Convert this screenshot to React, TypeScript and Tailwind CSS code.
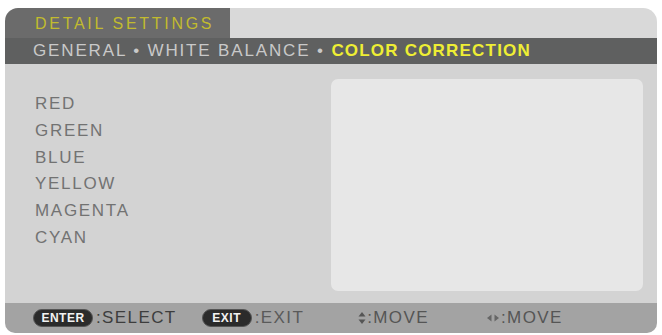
const font = { fontFamily: '"Liberation Sans", Arial, sans-serif' };

function KeyBadge({ label, width }: { label: string; width: string }) {
  return (
    <span
      className={`inline-flex h-[18px] ${width} items-center justify-center rounded-full border border-[#555] bg-[#2b2b2b] text-[12px] font-bold tracking-[0.5px] text-[#f2f2f2]`}
    >
      {label}
    </span>
  );
}

function UpDown() {
  return (
    <svg width="8" height="14" viewBox="0 0 8 14" className="mr-[1px]">
      <path d="M4 1 L7.5 5.5 L0.5 5.5 Z" fill="#555" />
      <path d="M4 13 L7.5 8.5 L0.5 8.5 Z" fill="#555" />
    </svg>
  );
}

function LeftRight() {
  return (
    <svg width="14" height="10" viewBox="0 0 14 10" className="mr-[1px]">
      <path d="M1 5 L5.5 1.5 L5.5 8.5 Z" fill="#666" />
      <path d="M13 5 L8.5 1.5 L8.5 8.5 Z" fill="#666" />
    </svg>
  );
}

const items = ["RED", "GREEN", "BLUE", "YELLOW", "MAGENTA", "CYAN"];

export default function App() {
  return (
    <div className="h-[335px] w-[662px] bg-white pl-[5px] pt-[8px]" style={font}>
      <div className="flex h-[325px] w-[652px] flex-col overflow-hidden rounded-tl-[13px] rounded-tr-[14px] rounded-bl-[10px] rounded-br-[10px]">
        <div className="flex h-[30px]">
          <div className="flex w-[225px] items-center bg-[#6b6b6b] pl-[30px] pt-[1px] text-[16px] tracking-[2.7px] text-[#c2bb2e]">
            DETAIL SETTINGS
          </div>
          <div className="flex-1 bg-[#d9d9d9]" />
        </div>
        <div className="flex h-[26px] items-center bg-[#5f6060] pl-[28px] text-[17px] tracking-[1.85px] text-[#c9c9c9]">
          <span>GENERAL • WHITE BALANCE •&nbsp;</span>
          <span className="font-bold tracking-[1.2px] text-[#eeee34]">COLOR CORRECTION</span>
        </div>
        <div className="flex flex-1 bg-[#d3d3d3]">
          <div className="flex w-[326px] flex-col pl-[30px] pt-[27px] text-[17px] leading-[26.75px] tracking-[1.7px] text-[#727272]">
            {items.map((it) => (
              <span key={it}>{it}</span>
            ))}
          </div>
          <div className="mb-[12px] mt-[15px] w-[312px] rounded-[7px] bg-[#e7e7e7]" />
        </div>
        <div className="flex h-[30px] items-center bg-[#a3a3a3] text-[17px] tracking-[1.4px]">
          <div className="ml-[28px] flex items-center">
            <KeyBadge label="ENTER" width="w-[60px]" />
            <span className="ml-[3px] text-[#3d3d3d]">:SELECT</span>
          </div>
          <div className="ml-[25px] flex items-center">
            <KeyBadge label="EXIT" width="w-[50px]" />
            <span className="ml-[3px] text-[#5a5a5a]">:EXIT</span>
          </div>
          <div className="ml-[54px] flex items-center text-[#555]">
            <UpDown />
            <span>:MOVE</span>
          </div>
          <div className="ml-[57px] flex items-center text-[#555]">
            <LeftRight />
            <span>:MOVE</span>
          </div>
        </div>
      </div>
    </div>
  );
}
